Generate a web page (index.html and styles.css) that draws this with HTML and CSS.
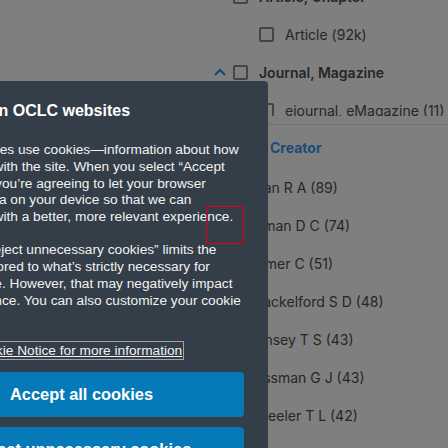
FILE: index.html
```html
<!DOCTYPE html>
<html lang="en">
<head>
<meta charset="utf-8">
<title>WorldCat filters</title>
<link rel="stylesheet" href="styles.css">
</head>
<body>
<main class="page">
  <aside class="facets">
    <div class="format-list">
      <div class="row group"><span class="chev-slot"></span><span class="cb"></span><span class="label bold">Article, Chapter</span></div>
      <div class="row sub"><span class="cb"></span><span class="label">Article (92k)</span></div>
      <div class="row group">
        <svg class="chev" width="12" height="8" viewBox="0 0 12 8"><path d="M1 7 L6 2 L11 7" fill="none" stroke="#0e4a80" stroke-width="2"/></svg>
        <span class="cb"></span><span class="label bold">Journal, Magazine</span></div>
      <div class="row sub"><span class="cb"></span><span class="label">ejournal, eMagazine (11)</span></div>
    </div>
    <div class="divider"></div>
    <h3 class="facet-title">Creator</h3>
    <ul class="creator-list">
      <li>Khan R A (89)</li>
      <li>Roman D C (74)</li>
      <li>Homer C (51)</li>
      <li>Shackelford S D (48)</li>
      <li>Dunsey T S (43)</li>
      <li>Rossman G J (43)</li>
      <li>Wheeler T L (42)</li>
    </ul>
  </aside>
</main>

<section class="cookie-dialog" role="dialog">
  <h2 class="cookie-title">Cookies on OCLC websites</h2>
  <p class="cookie-text">OCLC websites use cookies—information about how<br>you interact with the site. When you select “Accept<br>all cookies,” you’re agreeing to let your browser<br>store that data on your device so that we can<br>provide you with a better, more relevant experience.</p>
  <p class="cookie-text">Selecting “Reject unnecessary cookies” limits the<br>data that’s stored to what’s strictly necessary for<br>basic site use. However, that may negatively impact<br>your experience. You can also customize your cookie<br>settings.</p>
  <p class="cookie-text link-line"><a class="cookie-link" href="#">See our Cookie Notice for more information</a></p>
  <div class="cookie-actions">
    <button class="cookie-btn">Accept all cookies</button>
    <button class="cookie-btn">Reject unnecessary cookies</button>
  </div>
  <span class="focus-ring"></span>
</section>
</body>
</html>
```

FILE: styles.css
```css
html, body {
  margin: 0;
  padding: 0;
}
body {
  background: #7f7f7f;
  font-family: Inter, "Noto Sans", sans-serif;
  color: #262626;
  overflow: hidden;
  height: 448px;
}
.page {
  display: flex;
}
.facets {
  margin-left: 206px;
  width: 242px;
  display: flex;
  flex-direction: column;
}
.format-list {
  margin-top: -23px;
  height: 139px;
  overflow: hidden;
}
.row {
  display: flex;
  align-items: center;
  height: 38px;
  font-size: 14px;
  white-space: nowrap;
}
.row.group {
  padding-left: 8px;
}
.row.sub {
  padding-left: 53px;
}
.chev-slot, .chev {
  width: 12px;
  flex: none;
}
.chev {
  height: 8px;
  margin-top: -1px;
}
.cb {
  width: 15px;
  height: 15px;
  box-sizing: border-box;
  border: 2px solid #444;
  border-radius: 2px;
  flex: none;
}
.row.group .cb {
  margin-left: 7px;
}
.label {
  margin-left: 11px;
}
.bold {
  font-weight: 600;
}
.divider {
  margin-top: 8px;
  height: 1px;
  background: #707070;
}
.facet-title {
  margin: 13px 0 0;
  padding-left: 64px;
  font-size: 14px;
  line-height: 20px;
  font-weight: 700;
  color: #1c4a74;
}
.creator-list {
  list-style: none;
  margin: 10px 0 0;
  padding: 0 0 0 40px;
  font-size: 14px;
}
.creator-list li {
  height: 38px;
  display: flex;
  align-items: center;
  white-space: nowrap;
}

.cookie-dialog {
  position: fixed;
  left: -105px;
  top: 81px;
  width: 325px;
  height: 400px;
  padding: 20px 24px 0;
  background: #333e48;
  border-radius: 4px;
  color: #f2f2f2;
  font-family: "Liberation Sans", Arial, sans-serif;
}
.cookie-title {
  margin: 0 0 21px 3px;
  font-size: 16px;
  line-height: 20px;
  font-weight: 700;
  color: #fff;
  white-space: nowrap;
}
.cookie-text {
  margin: 0 0 16.5px;
  font-size: 13.7px;
  line-height: 16.75px;
  white-space: nowrap;
}
.link-line {
  margin-bottom: 13px;
}
.cookie-link {
  color: #f2f2f2;
  text-decoration: underline;
  outline: 1px solid #a3a3a3;
  outline-offset: 1px;
}
.cookie-actions {
  display: flex;
  flex-direction: column;
  gap: 10px;
}
.cookie-btn {
  height: 45px;
  border: none;
  border-radius: 4px;
  background: #067ab9;
  color: #fff;
  font-family: "Liberation Sans", Arial, sans-serif;
  font-size: 16.4px;
  font-weight: 700;
  text-align: center;
  white-space: nowrap;
}
.focus-ring {
  position: absolute;
  left: 311px;
  top: 125px;
  width: 38px;
  height: 38px;
  box-sizing: border-box;
  border: 1px solid #e0000f;
}
```
